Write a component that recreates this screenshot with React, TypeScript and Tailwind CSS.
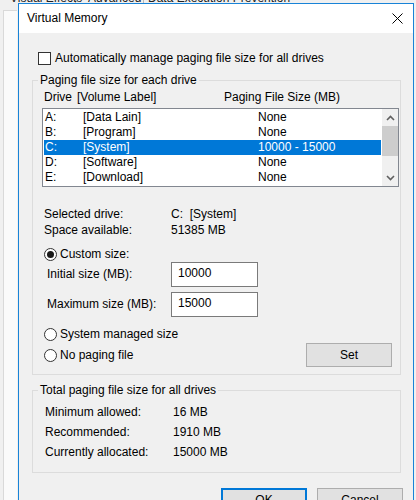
import React from 'react';

type Drive = { letter: string; label: string; size: string };

const drives: Drive[] = [
  { letter: 'A:', label: '[Data Lain]', size: 'None' },
  { letter: 'B:', label: '[Program]', size: 'None' },
  { letter: 'C:', label: '[System]', size: '10000 - 15000' },
  { letter: 'D:', label: '[Software]', size: 'None' },
  { letter: 'E:', label: '[Download]', size: 'None' },
];

const selected = 2;

const Radio: React.FC<{ checked?: boolean; label: string }> = ({ checked, label }) => (
  <div className="flex items-center h-[16px]">
    <span className="w-[13px] h-[13px] rounded-full border border-[#333333] bg-white flex items-center justify-center">
      {checked && <span className="w-[7px] h-[7px] rounded-full bg-[#1a1a1a]" />}
    </span>
    <span className="ml-[3px]">{label}</span>
  </div>
);

const GroupBox: React.FC<{ title: string; className?: string; children: React.ReactNode }> = ({ title, className, children }) => (
  <div className={`border border-[#dcdcdc] ${className ?? ''}`}>
    <div className="-mt-[8px] ml-[5px] px-[2px] w-fit h-[15px] leading-[15px] bg-[#f0f0f0]">{title}</div>
    {children}
  </div>
);

const Button: React.FC<{ label: string; primary?: boolean; className?: string }> = ({ label, primary, className }) => (
  <button
    className={`h-[24px] w-[86px] bg-[#e1e1e1] flex items-center justify-center ${
      primary ? 'border-2 border-[#0078d7]' : 'border border-[#adadad]'
    } ${className ?? ''}`}
  >
    {label}
  </button>
);

const Chevron: React.FC<{ down?: boolean }> = ({ down }) => (
  <svg width="9" height="6" viewBox="0 0 9 6">
    <path d={down ? 'M1 1 L4.5 4.5 L8 1' : 'M1 5 L4.5 1.5 L8 5'} stroke="#606060" strokeWidth="1.6" fill="none" />
  </svg>
);

export default function App() {
  return (
    <div className="relative w-[416px] h-[500px] overflow-hidden bg-[#f0f0f0] text-[12px] leading-[15px] text-black font-['Liberation_Sans',Arial,sans-serif]">
      {/* window behind the dialog */}
      <div className="flex h-[15px] -mt-[9px] text-[#222] whitespace-nowrap overflow-hidden">
        <div className="pl-[10px] pr-[2px] w-[76px] shrink-0 border-r border-[#b9b9b9]">Visual Effects</div>
        <div className="pl-[12px] w-[68px] shrink-0 border-r border-[#b9b9b9]">Advanced</div>
        <div className="pl-[4px] shrink-0">Data Execution Prevention</div>
      </div>
      <div className="ml-[3px] mt-[4px] h-[600px] w-[14px] border-l border-t border-[#d9d9d9] bg-[#fafafa]" />

      {/* dialog */}
      <div className="absolute left-[18px] top-[3px] w-[396px] h-[530px] border border-[#1883d7] bg-[#f0f0f0] flex flex-col">
        <div className="h-[29px] bg-white flex items-center justify-between pl-[8px] pr-[10px]">
          <span>Virtual Memory</span>
          <svg width="11" height="11" viewBox="0 0 11 11">
            <path d="M0.5 0.5 L10.5 10.5 M10.5 0.5 L0.5 10.5" stroke="#000" strokeWidth="1" />
          </svg>
        </div>

        <div className="flex flex-col pt-[18px]">
          <div className="flex items-center h-[14px] ml-[19px]">
            <span className="w-[13px] h-[13px] border border-[#333333] bg-white" />
            <span className="ml-[4px]">Automatically manage paging file size for all drives</span>
          </div>

          <GroupBox title="Paging file size for each drive" className="ml-[13px] mt-[15px] w-[369px] pb-[7px]">
            <div className="flex h-[15px] mt-[2px] ml-[11px]">
              <span className="w-[33px]">Drive</span>
              <span className="w-[147px]">[Volume Label]</span>
              <span>Paging File Size (MB)</span>
            </div>

            <div className="mt-[3px] ml-[9px] w-[357px] h-[79px] border border-[#828790] bg-white flex">
              <div className="flex-1 pt-[1px] px-[1px]">
                {drives.map((d, i) => (
                  <div
                    key={d.letter}
                    className={`flex h-[15px] pl-[1px] ${i === selected ? 'bg-[#0078d7] text-white' : ''}`}
                  >
                    <span className="w-[38px]">{d.letter}</span>
                    <span className="w-[175px]">{d.label}</span>
                    <span>{d.size}</span>
                  </div>
                ))}
              </div>
              <div className="w-[16px] bg-[#f0f0f0] flex flex-col">
                <div className="h-[17px] flex items-center justify-center">
                  <Chevron />
                </div>
                <div className="h-[30px] bg-[#cdcdcd]" />
                <div className="flex-1" />
                <div className="h-[17px] flex items-center justify-center">
                  <Chevron down />
                </div>
              </div>
            </div>

            <div className="mt-[19px] ml-[11px]">
              <div className="flex h-[16px] items-center">
                <span className="w-[127px]">Selected drive:</span>
                <span>C:&nbsp; [System]</span>
              </div>
              <div className="flex h-[16px] items-center">
                <span className="w-[127px]">Space available:</span>
                <span>51385 MB</span>
              </div>
            </div>

            <div className="mt-[9px] ml-[11px] h-[15px] flex items-center">
              <Radio checked label="Custom size:" />
            </div>

            <div className="ml-[11px] flex items-center h-[25px]">
              <span className="w-[127px] pl-[3px]">Initial size (MB):</span>
              <div className="w-[87px] h-[25px] border border-[#7a7a7a] bg-white pl-[6px] pt-[3px]">10000</div>
            </div>
            <div className="mt-[5px] ml-[11px] flex items-center h-[25px]">
              <span className="w-[127px] pl-[3px]">Maximum size (MB):</span>
              <div className="w-[87px] h-[25px] border border-[#7a7a7a] bg-white pl-[6px] pt-[3px]">15000</div>
            </div>

            <div className="mt-[9px] ml-[11px] mr-[8px] flex justify-between items-start">
              <div className="flex flex-col gap-[5px]">
                <Radio label="System managed size" />
                <Radio label="No paging file" />
              </div>
              <Button label="Set" className="mt-[17px]" />
            </div>
          </GroupBox>

          <GroupBox title="Total paging file size for all drives" className="ml-[13px] mt-[15px] w-[369px] pb-[10px]">
            <div className="mt-[4px] ml-[12px]">
              {[
                ['Minimum allowed:', '16 MB'],
                ['Recommended:', '1910 MB'],
                ['Currently allocated:', '15000 MB'],
              ].map(([k, v]) => (
                <div key={k} className="flex h-[20px] items-center">
                  <span className="w-[128px]">{k}</span>
                  <span>{v}</span>
                </div>
              ))}
            </div>
          </GroupBox>

          <div className="mt-[15px] pr-[10px] flex justify-end gap-[10px]">
            <Button label="OK" primary className="w-[85px]" />
            <Button label="Cancel" className="w-[85px]" />
          </div>
        </div>
      </div>
    </div>
  );
}
